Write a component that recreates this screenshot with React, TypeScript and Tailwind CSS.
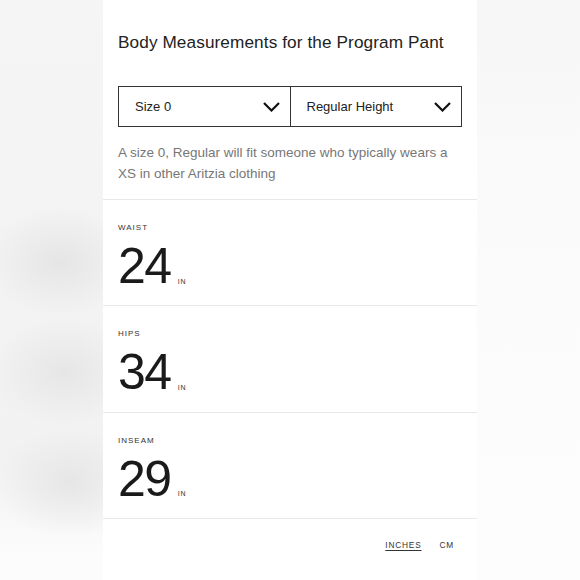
const measurements = [
  { label: 'WAIST', value: '24' },
  { label: 'HIPS', value: '34' },
  { label: 'INSEAM', value: '29' },
];

const Chevron = () => (
  <svg width="17" height="10" viewBox="0 0 17 10" fill="none" className="text-[#111]">
    <polyline points="1,1 8.5,8.5 16,1" stroke="currentColor" strokeWidth="2.2" />
  </svg>
);

const SelectBox = ({ label, className }: { label: string; className?: string }) => (
  <div className={`flex h-full flex-1 items-center justify-between pl-4 pr-[10px] ${className ?? ''}`}>
    <span className="text-[13px] text-[#222]">{label}</span>
    <Chevron />
  </div>
);

export default function App() {
  return (
    <div
      className="flex h-[580px] w-[580px] overflow-hidden bg-[#f7f7f7]"
      style={{ fontFamily: '"Liberation Sans", Arial, sans-serif' }}
    >
      <div className="h-full w-[103px] bg-[radial-gradient(ellipse_75px_55px_at_60px_262px,#e5e5e5,transparent),radial-gradient(ellipse_75px_55px_at_65px_372px,#e6e6e6,transparent),radial-gradient(ellipse_75px_55px_at_70px_482px,#e6e6e6,transparent),linear-gradient(to_bottom,#f5f5f5_0%,#f2f2f2_80%,#fcfcfc_96%)]" />
      <div className="flex h-full w-[374px] flex-col bg-white">
        <div className="border-b border-[#e8e8e8] px-[15px] pt-[31px] pb-[15px]">
          <h1 className="text-[17.2px] leading-[22px] tracking-[0.1px] text-[#222]">
            Body Measurements for the Program Pant
          </h1>
          <div className="mt-[33px] flex h-[41px] border border-[#333]">
            <SelectBox label="Size 0" className="border-r border-[#333]" />
            <SelectBox label="Regular Height" />
          </div>
          <p className="mt-[15px] text-[13.5px] leading-[21px] text-[#777]">
            A size 0, Regular will fit someone who typically wears a XS in other Aritzia clothing
          </p>
        </div>
        {measurements.map((m) => (
          <div key={m.label} className="h-[106.4px] border-b border-[#e8e8e8] px-[15px] pt-[23px]">
            <div className="text-[8px] leading-[10px] tracking-[1px] text-[#333]">{m.label}</div>
            <div className="mt-[8px] flex items-end">
              <span className="text-[50px] leading-[50px] tracking-[-1.5px] text-[#1a1a1a]">{m.value}</span>
              <span className="mb-[4px] ml-[7px] text-[7px] tracking-[1px] text-[#333]">IN</span>
            </div>
          </div>
        ))}
        <div className="flex justify-end gap-[18px] pt-[20px] pr-[23px] text-[8.3px] tracking-[0.8px] text-[#333]">
          <span className="underline underline-offset-2">INCHES</span>
          <span>CM</span>
        </div>
      </div>
      <div className="h-full flex-1 bg-[linear-gradient(to_bottom,#f6f6f6_0%,#fafafa_30%,#fdfdfd_100%)]" />
    </div>
  );
}
